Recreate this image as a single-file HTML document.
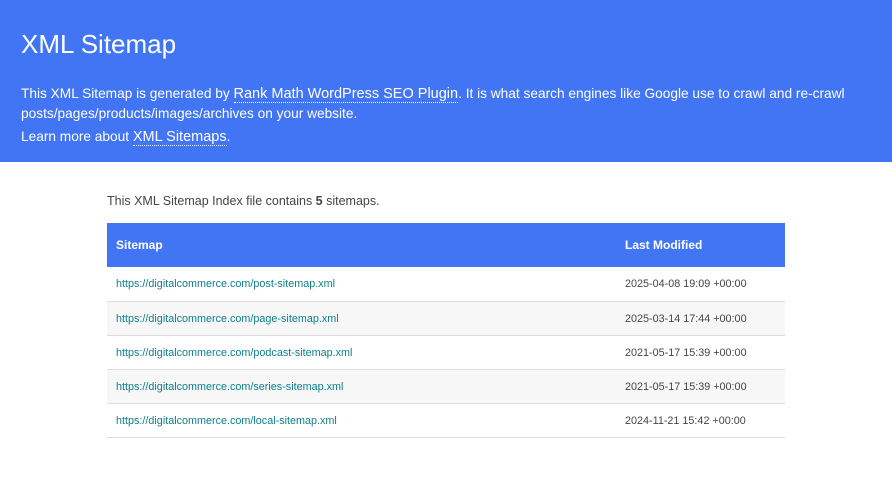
<!DOCTYPE html>
<html><head><meta charset="utf-8"><style>
*{margin:0;padding:0;box-sizing:border-box}
body{width:892px;height:484px;background:#fff;font-family:"Liberation Sans",Arial,sans-serif;color:#545353;position:relative;overflow:hidden}
#header{position:absolute;left:0;top:0;width:892px;height:162px;background:#4275f4;color:#fff}
h1{position:absolute;left:21px;top:27px;font-size:26px;font-weight:normal;line-height:34px}
.p1{position:absolute;left:21px;top:84px;font-size:13.7px;line-height:20px;width:860px}
.p2{position:absolute;left:21px;top:127px;font-size:13.7px;line-height:20px}
#header a{color:#fff;text-decoration:none;border-bottom:1px dotted #fff;font-size:14.5px}
.intro{position:absolute;left:107px;top:194px;font-size:12.5px;color:#444}
table{position:absolute;left:107px;top:223px;width:678px;border-collapse:collapse;font-size:10.8px}
th{background:#4275f4;color:#fff;text-align:left;height:44px;padding-left:9px;font-size:12px;font-weight:bold}
td{height:34px;padding-left:9px;border-bottom:1px solid #ddd;color:#444;padding-top:1px}
tr:nth-child(odd) td{background:#f7f7f7}
td a{color:#0d7f8b;text-decoration:none}
.c2{width:169px}
</style></head><body>
<div id="header">
<h1>XML Sitemap</h1>
<div class="p1">This XML Sitemap is generated by <a>Rank Math WordPress SEO Plugin</a>. It is what search engines like Google use to crawl and re-crawl posts/pages/products/images/archives on your website.</div>
<div class="p2">Learn more about <a>XML Sitemaps</a>.</div>
</div>
<div class="intro">This XML Sitemap Index file contains <b>5</b> sitemaps.</div>
<table>
<tr><th>Sitemap</th><th class="c2">Last Modified</th></tr>
<tr><td><a>https://digitalcommerce.com/post-sitemap.xml</a></td><td>2025-04-08 19:09 +00:00</td></tr>
<tr><td><a>https://digitalcommerce.com/page-sitemap.xml</a></td><td>2025-03-14 17:44 +00:00</td></tr>
<tr><td><a>https://digitalcommerce.com/podcast-sitemap.xml</a></td><td>2021-05-17 15:39 +00:00</td></tr>
<tr><td><a>https://digitalcommerce.com/series-sitemap.xml</a></td><td>2021-05-17 15:39 +00:00</td></tr>
<tr><td><a>https://digitalcommerce.com/local-sitemap.xml</a></td><td>2024-11-21 15:42 +00:00</td></tr>
</table>
</body></html>
